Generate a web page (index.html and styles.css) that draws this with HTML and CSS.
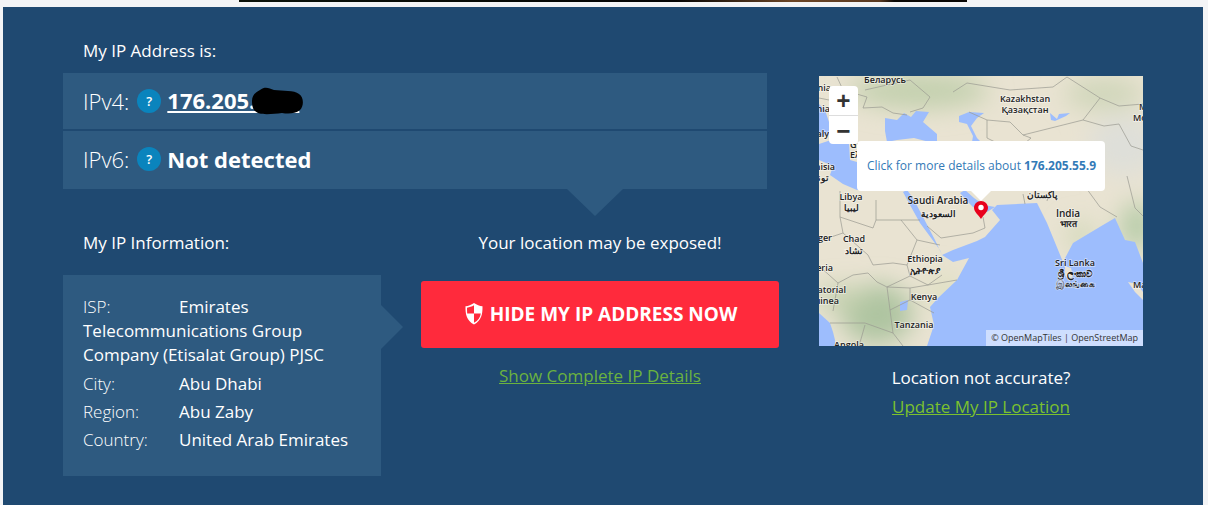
FILE: index.html
```html
<!DOCTYPE html>
<html lang="en">
<head>
	<meta charset="UTF-8">
	<meta name="viewport" content="width=device-width, initial-scale=1.0">
	<title>My IP Address</title>
	<link rel="stylesheet" href="styles.css">
</head>
<body>
	<div class="banner"></div>
	<div class="panel">
		<div class="main">
			<div class="title">My IP Address is:</div>
			<div class="ip-row">
				<span class="ip-label">IPv4:</span>
				<span class="help">?</span>
				<span class="ip-wrap">
					<a class="ip-value" href="#">176.205.55.9</a>
					<svg class="scribble" width="54" height="28" viewBox="0 0 54 28"><path d="M2 14C2 8 6 5 10 3 15-1 19 1 24 3 33 4 44 3 49 7 54 10 54 19 50 23 45 27 38 27 32 26 24 27 13 28 8 26 3 24 2 19 2 14Z"/></svg>
				</span>
			</div>
			<div class="ip-row ip-row-second">
				<span class="ip-label">IPv6:</span>
				<span class="help">?</span>
				<span class="ip-value">Not detected</span>
			</div>
			<div class="lower">
				<div class="info-col">
					<div class="title">My IP Information:</div>
					<div class="info">
						<div class="info-row"><span class="info-label">ISP:</span>Emirates Telecommunications Group Company (Etisalat Group) PJSC</div>
						<div class="info-row"><span class="info-label">City:</span>Abu Dhabi</div>
						<div class="info-row"><span class="info-label">Region:</span>Abu Zaby</div>
						<div class="info-row"><span class="info-label">Country:</span>United Arab Emirates</div>
					</div>
				</div>
				<div class="action-col">
					<div class="warning">Your location may be exposed!</div>
					<a class="hide-btn" href="#">
						<svg width="18" height="22" viewBox="0 0 18 22"><path fill="#fff" d="M9 0C6 2 3.500 3 .5 3.200 .3 11 1.500 17.500 9 21.500 16.500 17.500 17.700 11 17.500 3.200 14.500 3 12 2 9 0Z"/><path fill="#ff2a3c" d="M9 2.300V10.500H2.200C2.100 8.800 2 7 2 4.700 4.500 4.400 6.800 3.600 9 2.300ZM9 10.500H15.800C15.300 14.500 13.200 17.500 9 19.800Z"/></svg>
						Hide my IP address now
					</a>
					<a class="green-link" href="#">Show Complete IP Details</a>
				</div>
			</div>
		</div>
		<div class="side">
			<div class="map">
				<svg class="map-art" width="324" height="270" viewBox="0 0 324 270">
					<defs>
						<filter id="soft"><feGaussianBlur stdDeviation="12"/></filter>
					</defs>
					<rect width="324" height="270" fill="#e9e3d2"/>
					<g filter="url(#soft)">
						<ellipse cx="58" cy="238" rx="36" ry="30" fill="#aec4a0"/>
						<ellipse cx="22" cy="222" rx="26" ry="12" fill="#c3d0ae"/>
						<ellipse cx="100" cy="15" rx="70" ry="18" fill="#c3d0ae"/>
						<ellipse cx="305" cy="70" rx="36" ry="30" fill="#dedfd9"/>
						<ellipse cx="285" cy="18" rx="40" ry="16" fill="#cfd6b9"/>
						<ellipse cx="318" cy="150" rx="16" ry="24" fill="#b4cba6"/>
						<ellipse cx="262" cy="160" rx="14" ry="14" fill="#d0d8b8"/>
						<ellipse cx="125" cy="215" rx="18" ry="18" fill="#dfe0c2"/>
					</g>
					<g fill="#9dbdfd">
						<!-- indian ocean -->
						<path d="M108 270 115 249 111 231 119 222 138 204 150 182 134 186 123 179 134 174 158 165 166 161 181 144 173 134 178 129 218 127 228 147 244 186 254 167 284 149 296 142 306 164 316 166 324 187V270Z"/>
						<!-- red sea, gulf -->
						<path d="M84 116 91 129 101 147 121 174 123 179 116 164 104 141 94 122 88 114Z"/>
						<path d="M141 117 148 125 154 131 168 136 176 131 165 129 155 122 146 114Z"/>
						<!-- mediterranean -->
						<path d="M0 68 18 62 30 66 31 84 38 86 60 86 60 114 38 114 24 108 11 99 14 90 0 84Z"/>
						<path d="M0 28 6 34 12 52 20 58 0 60Z"/>
						<!-- black sea -->
						<path d="M66 42 78 44 85 37 92 41 97 35 110 36 104 46 118 58 118 68 95 62 78 64 68 66 66 55Z"/>
						<!-- caspian -->
						<path d="M140 40 150 36 165 37 158 42 152 50 158 62 166 70 162 76 152 72 154 60 148 48 140 46Z"/>
						<path d="M231 37 238 43 240 38 251 37 247 40 236 45 232 44Z"/>
						<!-- victoria, atlantic -->
						<path d="M81 226 89 224 88 234 81 235Z"/>
						<path d="M0 237 11 247 14 256 16 264 16 270H0Z"/>
					</g>
					<g fill="#e9e3d2">
						<path d="M246 190 252 192 254 200 250 205 246 199Z"/>
						<path d="M309 206 318 208 324 216V224L316 216Z"/>
					</g>
					<g class="borders">
						<path d="M18 1 24 14 48 21 44 32 63 31 74 37 88 39"/>
						<path d="M46 14 68 9 91 4 111 21 104 32 91 36"/>
						<path d="M24 14 10 24 0 22"/>
						<path d="M134 16 148 7 191 14 234 11 248 1 281 22 264 44 204 59 191 46 168 44 150 36"/>
						<path d="M168 44V62L176 66 200 72 212 62 204 59"/>
						<path d="M281 22 300 30 324 28"/>
						<path d="M264 44 285 50 300 48 312 70 324 74"/>
						<path d="M228 125 232 110 224 100 240 85 236 65"/>
						<path d="M240 85 262 105 281 131 298 141"/>
						<path d="M204 118 206 128"/>
						<path d="M21 115V141L54 152 57 144V124"/>
						<path d="M57 144H101"/>
						<path d="M21 141 24 157 0 165"/>
						<path d="M24 157 49 179 54 189 74 187 88 189 98 164 82 144"/>
						<path d="M98 164 121 169"/>
						<path d="M88 189 91 200 68 211 91 212 109 209 138 204"/>
						<path d="M91 200 109 209 123 199"/>
						<path d="M19 207 34 199 49 197 58 206 68 211 71 234 74 257"/>
						<path d="M0 190 19 207 14 235"/>
						<path d="M91 212 91 224 115 237"/>
						<path d="M71 234 91 224"/>
						<path d="M11 247H46L74 257 84 270"/>
						<path d="M46 249 40 270"/>
						<path d="M122 162 154 157 166 152 164 141"/>
						<path d="M108 150 122 162"/>
						<path d="M308 100 316 132 324 140"/>
					</g>
					<g class="labels">
						<text x="66" y="7">Беларусь</text>
						<text x="206" y="26">Kazakhstan</text>
						<text x="206" y="37">Қазақстан</text>
						<text class="end" x="12" y="15">Romania</text>
						<text class="end" x="11" y="36">Albania</text>
						<text class="end" x="10" y="61">Italy</text>
						<text class="start" x="31" y="72">Greece</text>
						<text class="start" x="31" y="82">Ελλάδα</text>
						<text class="start" x="320" y="34">Mongolia</text>
						<text class="start" x="314" y="45">Монгол</text>
						<text x="32" y="124">Libya</text>
						<text x="32" y="135">ليبيا</text>
						<text class="end" x="16" y="94">Tunisia</text>
						<text class="end" x="10" y="105">تونس</text>
						<text class="big" x="119" y="128">Saudi Arabia</text>
						<text x="119" y="141">السعودية</text>
						<text x="223" y="122">پاکستان</text>
						<text class="big" x="249" y="141">India</text>
						<text x="249" y="151">भारत</text>
						<text x="35" y="166">Chad</text>
						<text x="35" y="178">تشاد</text>
						<text class="end" x="13" y="165">Niger</text>
						<text class="end" x="14" y="195">Nigeria</text>
						<text class="end" x="27" y="217">Equatorial</text>
						<text class="end" x="20" y="228">Guinea</text>
						<text x="106" y="186">Ethiopia</text>
						<text x="106" y="198">ኢትዮጵያ</text>
						<text x="105" y="224">Kenya</text>
						<text x="95" y="252">Tanzania</text>
						<text x="30" y="272">Angola</text>
						<text x="256" y="190">Sri Lanka</text>
						<text x="256" y="201">ශ්‍රී ලංකාව</text>
						<text x="256" y="211">இலங்கை</text>
						<text class="start" x="314" y="212">Malaysia</text>
					</g>
				</svg>
				<div class="zoom-ctl">
					<span class="zoom-btn">+</span>
					<span class="zoom-btn">−</span>
				</div>
				<div class="popup">Click for more details about <b>176.205.55.9</b></div>
				<svg class="pin" width="14" height="18" viewBox="0 0 14 18"><path fill="#e8001c" d="M7 0C3 0 0 3 0 6.800 0 11 4.500 14 7 18 9.500 14 14 11 14 6.800 14 3 11 0 7 0Z"/><circle cx="7" cy="6.500" r="2.700" fill="#fff"/></svg>
				<div class="attrib">© OpenMapTiles | OpenStreetMap</div>
			</div>
			<div class="side-text">Location not accurate?</div>
			<a class="green-link side-link" href="#">Update My IP Location</a>
		</div>
	</div>
</body>
</html>
```

FILE: styles.css
```css
* {
    padding: 0;
    margin: 0;
    box-sizing: border-box;
}

html, body {
    height: 505px;
    overflow: hidden;
}

body {
    background: #f3f4f6;
    font-family: "Open Sans", sans-serif;
    font-size: 17px;
    line-height: 24px;
    color: #fff;
}

.banner {
    width: 728px;
    height: 2px;
    margin-left: 239px;
    background: linear-gradient(90deg, #0b120a 0, #050505 60%, #6b4526 76%, #5a3a22 88%, #0a0806 90%);
}

.panel {
    display: flex;
    width: 1200px;
    height: 498px;
    margin: 5px 0 0 3px;
    padding: 32px 0 0 60px;
    background: #1f4971;
}

.main {
    width: 716px;
}

.title {
    padding-left: 20px;
}

.main > .title {
    margin-bottom: 10px;
}

/* ip rows */
.ip-row {
    display: flex;
    align-items: center;
    width: 704px;
    height: 56px;
    padding-left: 20px;
    background: #2e5a80;
}

.ip-row-second {
    position: relative;
    height: 58px;
    margin-top: 2px;
    padding-bottom: 3px;
}

.ip-row-second:after {
    content: "";
    position: absolute;
    left: 504px;
    top: 58px;
    border-top: 27px solid #2e5a80;
    border-left: 28px solid transparent;
    border-right: 28px solid transparent;
}

.ip-label {
    font-size: 22px;
    font-weight: 300;
}

.help {
    width: 24px;
    height: 24px;
    margin: 0 6px 0 8px;
    border-radius: 50%;
    background: #0a84bd;
    font-size: 13px;
    font-weight: 600;
    line-height: 24px;
    text-align: center;
}

.ip-wrap {
    position: relative;
}

.ip-value {
    color: #fff;
    font-size: 22px;
    font-weight: 700;
}

.scribble {
    position: absolute;
    left: 83px;
    top: -1px;
}

/* lower part */
.lower {
    display: flex;
    margin-top: 42px;
}

.info-col {
    width: 318px;
}

.info-col .title {
    margin-bottom: 20px;
}

.info {
    position: relative;
    height: 201px;
    padding: 20px 20px 0;
    background: #2e5a80;
}

.info:after {
    content: "";
    position: absolute;
    left: 318px;
    top: 30px;
    border-left: 22px solid #2e5a80;
    border-top: 22px solid transparent;
    border-bottom: 22px solid transparent;
}

.info-row {
    margin-bottom: 4px;
}

.info-row:first-child {
    margin-bottom: 5px;
}

.info-label {
    display: inline-block;
    width: 96px;
    font-weight: 300;
}

.action-col {
    width: 358px;
    margin-left: 40px;
    text-align: center;
}

.warning {
    margin-bottom: 26px;
}

.hide-btn {
    display: flex;
    align-items: center;
    justify-content: center;
    gap: 7px;
    height: 67px;
    margin-bottom: 16px;
    padding: 0 0 2px 2px;
    border-radius: 3px;
    background: #ff2a3c;
    color: #fff;
    font-size: 19px;
    font-weight: 700;
    text-decoration: none;
    text-transform: uppercase;
}

.green-link {
    color: #6bb33f;
}

/* map column */
.side {
    width: 324px;
    margin: 37px 0 0 40px;
    text-align: center;
}

.map {
    position: relative;
    width: 324px;
    height: 270px;
    margin-bottom: 20px;
    overflow: hidden;
    background: #9dbdfd;
}

.map-art {
    display: block;
}

.borders path {
    fill: none;
    stroke: #9a9a90;
    stroke-width: .7;
}

.labels text {
    fill: #222;
    stroke: rgba(255, 255, 255, .5);
    stroke-width: 1.5px;
    paint-order: stroke;
    font-size: 9px;
    font-weight: 600;
    text-anchor: middle;
}

.labels .big {
    font-size: 10px;
}

.labels .end {
    text-anchor: end;
}

.labels .start {
    text-anchor: start;
}

.zoom-ctl {
    position: absolute;
    left: 10px;
    top: 10px;
    width: 29px;
    height: 58px;
    border-radius: 4px;
    background: #fff;
}

.zoom-btn {
    display: block;
    height: 29px;
    color: #333;
    font-size: 25px;
    font-weight: 700;
    line-height: 28px;
    text-align: center;
}

.zoom-btn + .zoom-btn {
    border-top: 1px solid #ddd;
}

.popup {
    position: absolute;
    left: 38px;
    top: 65px;
    width: 248px;
    height: 50px;
    padding-left: 10px;
    border-radius: 4px;
    background: #fff;
    color: #337ab7;
    font-size: 12px;
    line-height: 50px;
    text-align: left;
    white-space: nowrap;
}

.popup:after {
    content: "";
    position: absolute;
    left: 114px;
    top: 50px;
    border-top: 10px solid #fff;
    border-left: 10px solid transparent;
    border-right: 10px solid transparent;
}

.pin {
    position: absolute;
    left: 155px;
    top: 125px;
}

.attrib {
    position: absolute;
    right: 0;
    bottom: 0;
    height: 16px;
    padding: 0 5px;
    background: rgba(255, 255, 255, .5);
    color: #333;
    font-size: 9px;
    line-height: 16px;
}

.side-link {
    display: block;
    margin-top: 5px;
    color: #7cc12e;
}
```
